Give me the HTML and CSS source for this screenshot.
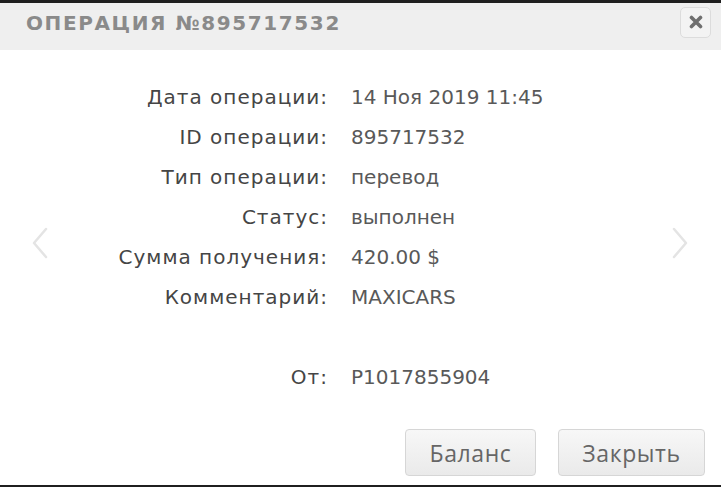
FILE: index.html
```html
<!DOCTYPE html>
<html lang="ru">
<head>
<meta charset="utf-8">
<link rel="stylesheet" href="styles.css">
</head>
<body>
<div class="dialog">
  <div class="header">
    <div class="title">ОПЕРАЦИЯ №895717532</div>
    <button class="close" aria-label="close">
      <svg width="14" height="14" viewBox="0 0 14 14"><path d="M2.5 2.5 L11.5 11.5 M11.5 2.5 L2.5 11.5" stroke="#6f6f6f" stroke-width="3.6" stroke-linecap="round"/></svg>
    </button>
  </div>
  <div class="content">
    <div class="details">
      <div class="label">Дата операции:</div><div class="value">14 Ноя 2019 11:45</div>
      <div class="label">ID операции:</div><div class="value">895717532</div>
      <div class="label">Тип операции:</div><div class="value">перевод</div>
      <div class="label">Статус:</div><div class="value">выполнен</div>
      <div class="label">Сумма получения:</div><div class="value">420.00 $</div>
      <div class="label">Комментарий:</div><div class="value">MAXICARS</div>
      <div class="label"></div><div class="value"></div>
      <div class="label">От:</div><div class="value">P1017855904</div>
    </div>
    <div class="actions">
      <button class="btn btn-balance">Баланс</button>
      <button class="btn btn-close">Закрыть</button>
    </div>
    <svg class="nav nav-left" width="20" height="34" viewBox="0 0 20 34"><polyline points="16,3 4,17 16,31" fill="none" stroke="#e4e4e4" stroke-width="2.5" stroke-linecap="round" stroke-linejoin="round"/></svg>
    <svg class="nav nav-right" width="20" height="34" viewBox="0 0 20 34"><polyline points="4,3 16,17 4,31" fill="none" stroke="#e4e4e4" stroke-width="2.5" stroke-linecap="round" stroke-linejoin="round"/></svg>
  </div>
</div>
</body>
</html>
```
FILE: styles.css
```css
html, body {
  margin: 0;
  padding: 0;
  background: #fff;
}
.dialog {
  width: 721px;
  height: 487px;
  box-sizing: border-box;
  border-top: 3px solid #1f1f1f;
  border-bottom: 2px solid #1f1f1f;
  display: flex;
  flex-direction: column;
  overflow: hidden;
}
.header {
  height: 47px;
  box-sizing: border-box;
  background: #efefef;
  display: flex;
  align-items: center;
  justify-content: space-between;
  padding: 0 10px 8px 26px;
  flex-shrink: 0;
}
.title {
  font-family: "DejaVu Sans", sans-serif;
  font-weight: bold;
  font-size: 20px;
  letter-spacing: 1.6px;
  color: #8a8a8a;
}
.close {
  width: 31px;
  height: 31px;
  margin-top: -1px;
  border: 1px solid #dcdcdc;
  border-radius: 5px;
  background: #f3f3f3;
  display: flex;
  align-items: center;
  justify-content: center;
  padding: 0;
}
.content {
  position: relative;
  flex: 1;
  padding-top: 27px;
}
.details {
  display: grid;
  grid-template-columns: 328px 1fr;
  column-gap: 23px;
  grid-auto-rows: 40px;
  align-items: center;
  font-family: "DejaVu Sans", sans-serif;
  font-size: 20px;
  color: #555;
}
.label {
  text-align: right;
  color: #454545;
  letter-spacing: 1px;
}
.value {
  color: #595959;
}
.actions {
  display: flex;
  justify-content: flex-end;
  gap: 22px;
  padding-right: 16px;
  margin-top: 32px;
}
.btn {
  height: 47px;
  border: 1px solid #d6d6d6;
  border-radius: 4px;
  background: linear-gradient(#f7f7f7, #eaeaea);
  font-family: "Open Sans", sans-serif;
  font-size: 23px;
  letter-spacing: 0.6px;
  color: #666;
  padding: 0;
}
.btn-balance { width: 131px; }
.btn-close { width: 147px; }
.nav {
  position: absolute;
  top: 176px;
}
.nav-left { left: 30px; }
.nav-right { left: 670px; }
```
